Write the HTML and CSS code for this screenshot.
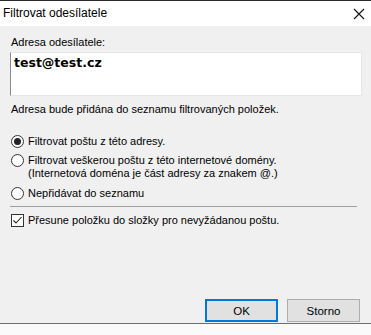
FILE: index.html
```html
<!DOCTYPE html>
<html lang="cs">
<head>
<meta charset="utf-8">
<link rel="stylesheet" href="styles.css">
</head>
<body>
<div class="window">
  <div class="titlebar">
    <span class="title">Filtrovat odesílatele</span>
    <svg class="close" width="12" height="12" viewBox="0 0 12 12"><path d="M1 1L11 11M11 1L1 11" stroke="#111" stroke-width="1.1" fill="none"/></svg>
  </div>
  <div class="content">
    <div class="label">Adresa odesílatele:</div>
    <div class="textbox">test@test.cz</div>
    <div class="note">Adresa bude přidána do seznamu filtrovaných položek.</div>
    <div class="options">
      <div class="opt"><span class="radio on"></span><span>Filtrovat poštu z této adresy.</span></div>
      <div class="opt"><span class="radio"></span><span>Filtrovat veškerou poštu z této internetové domény.<br>(Internetová doména je část adresy za znakem @.)</span></div>
      <div class="opt"><span class="radio"></span><span>Nepřidávat do seznamu</span></div>
    </div>
    <div class="sep"></div>
    <div class="opt check-row"><span class="check"><svg width="11" height="11" viewBox="0 0 11 11"><path d="M1.5 5.5L4 8L9.5 2" stroke="#222" stroke-width="1.1" fill="none"/></svg></span><span>Přesune položku do složky pro nevyžádanou poštu.</span></div>
    <div class="spacer"></div>
    <div class="buttons">
      <button class="btn default">OK</button>
      <button class="btn">Storno</button>
    </div>
  </div>
  <div class="taskbar"></div>
</div>
</body>
</html>
```
FILE: styles.css
```css
html, body {
  margin: 0;
  padding: 0;
}
body {
  width: 371px;
  height: 335px;
  overflow: hidden;
  font-family: "Liberation Sans", Arial, sans-serif;
  font-size: 11px;
  color: #000;
  background: #f0f0f0;
}
.window {
  display: flex;
  flex-direction: column;
  height: 335px;
}
.titlebar {
  height: 25px;
  border-top: 1px solid #2b2b2b;
  background: #fff;
  display: flex;
  align-items: center;
  justify-content: space-between;
  padding: 0 5px 0 3px;
  flex: none;
}
.title {
  font-size: 12px;
  margin-top: -1px;
}
.close {
  margin-right: 1px;
}
.content {
  flex: 1;
  display: flex;
  flex-direction: column;
  padding: 9px 12px 0 10px;
  background: #f0f0f0;
}
.label {
  line-height: 14px;
  padding-left: 1px;
}
.textbox {
  margin-top: 3px;
  height: 38px;
  background: #fff;
  border: 1px solid #e6e6e6;
  border-left-color: #8a8a8a;
  font-family: "DejaVu Sans", Verdana, sans-serif;
  font-weight: bold;
  font-size: 12.5px;
  padding: 2px 3px;
  line-height: 15px;
  margin-right: -3px;
}
.note {
  margin-top: 6px;
  line-height: 14px;
  padding-left: 1px;
}
.options {
  margin-top: 19px;
  display: flex;
  flex-direction: column;
  gap: 6px;
}
.opt {
  display: flex;
  align-items: flex-start;
  gap: 4px;
  line-height: 13px;
  padding-left: 1px;
}
.options .opt:last-child {
  margin-top: 1px;
}
.radio {
  width: 11px;
  height: 11px;
  border: 1px solid #333;
  border-radius: 50%;
  background: #fff;
  flex: none;
  position: relative;
}
.radio.on::after {
  content: "";
  position: absolute;
  left: 2px;
  top: 2px;
  width: 7px;
  height: 7px;
  border-radius: 50%;
  background: #222;
}
.sep {
  margin-top: 6px;
  height: 1px;
  background: #a0a0a0;
  margin-right: 2px;
}
.check-row {
  margin-top: 7px;
}
.check {
  width: 11px;
  height: 11px;
  border: 1px solid #333;
  background: #fff;
  flex: none;
  display: flex;
}
.spacer {
  flex: 1;
}
.buttons {
  display: flex;
  justify-content: flex-end;
  gap: 9px;
  margin-bottom: 1px;
  margin-right: -1px;
}
.btn {
  width: 73px;
  height: 23px;
  background: #e1e1e1;
  border: 1px solid #adadad;
  font-family: "Liberation Sans", Arial, sans-serif;
  font-size: 11.5px;
  color: #000;
  padding: 0;
}
.btn.default {
  border: 2px solid #0078d7;
}
.taskbar {
  height: 11px;
  border-top: 1px solid #6e6e6e;
  background: #fafafa;
  flex: none;
}
```
